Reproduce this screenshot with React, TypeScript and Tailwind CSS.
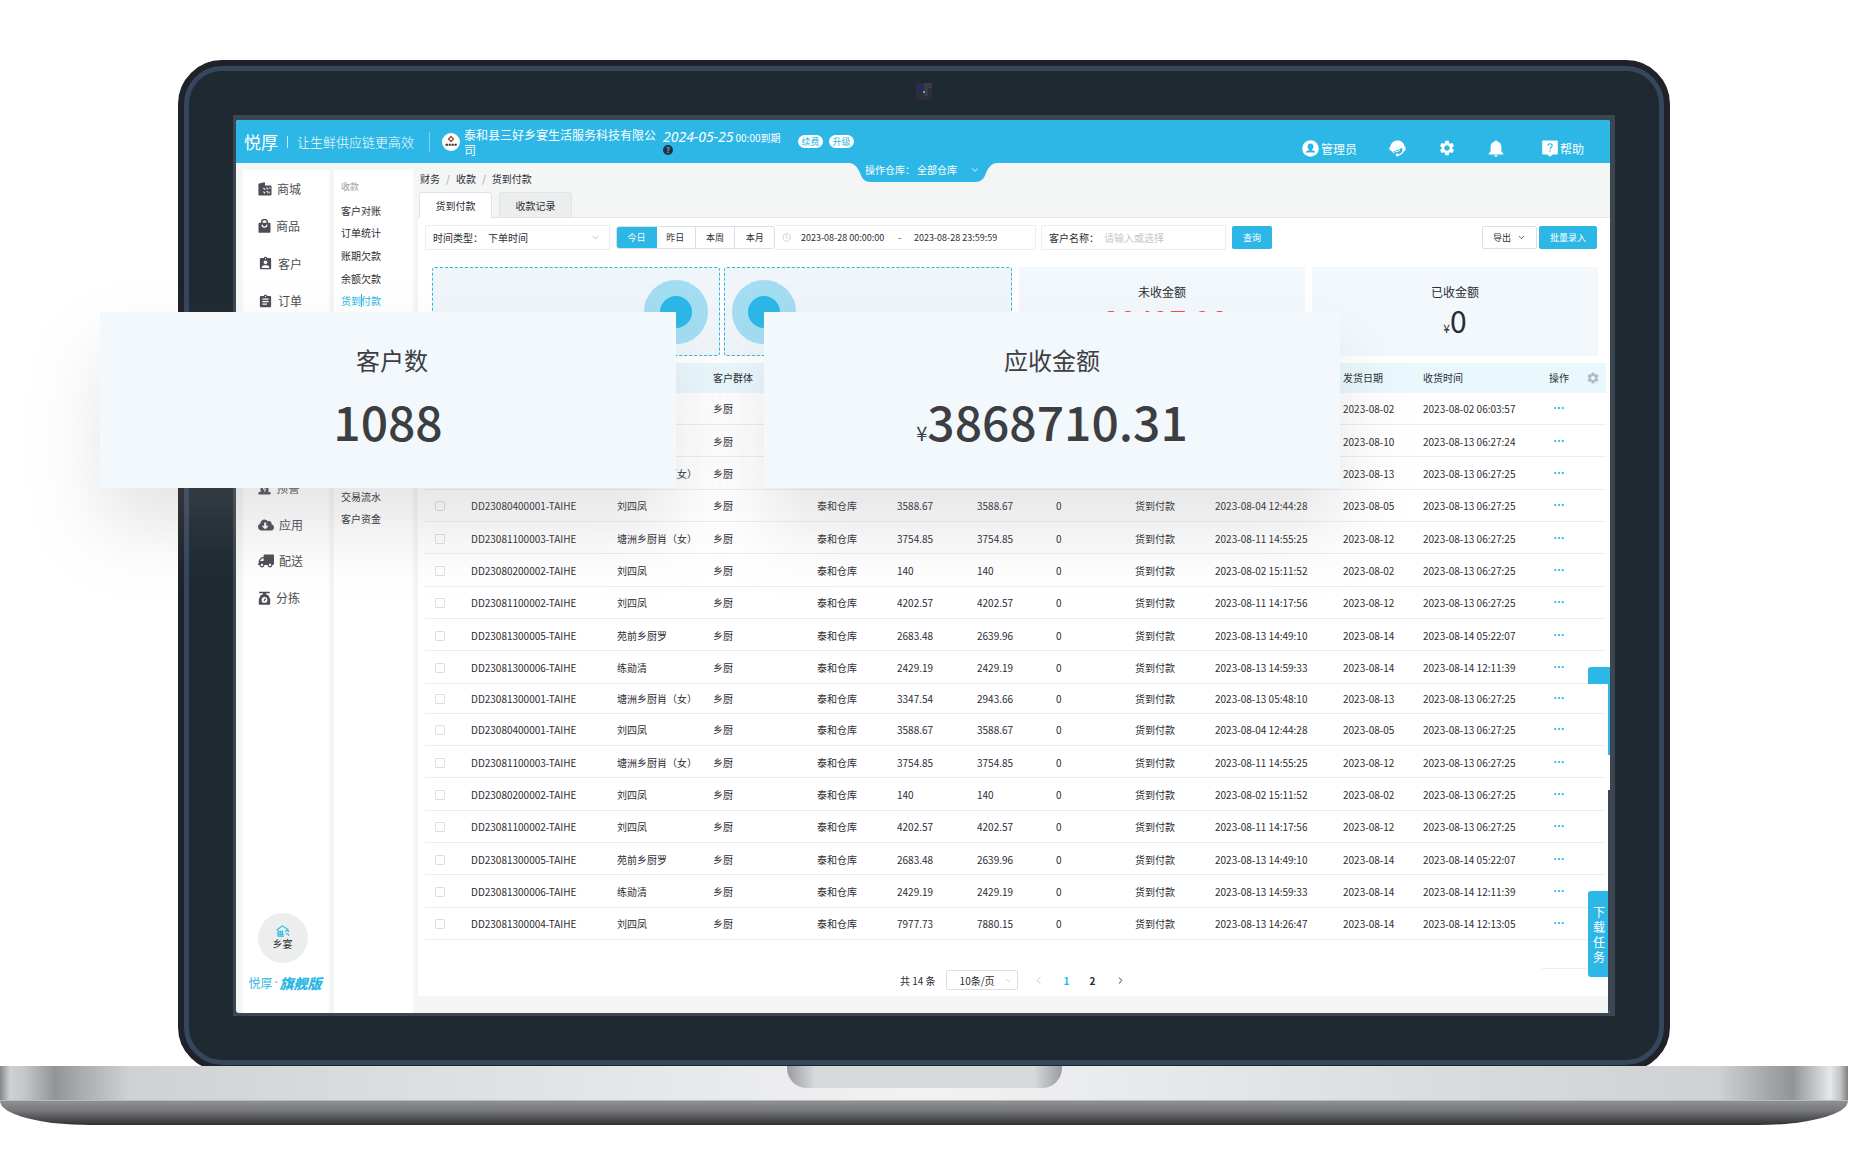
import type { ReactNode } from "react";
import { BsThreeDots } from "react-icons/bs";
import { FaCloudDownloadAlt, FaTruck } from "react-icons/fa";
import { FiChevronDown, FiChevronLeft, FiChevronRight, FiClock } from "react-icons/fi";
import { MdAssignment, MdAssignmentInd, MdSettings } from "react-icons/md";

type Row = {
  no?: string;
  name?: string;
  due?: string;
  real?: string;
  ordered?: string;
  shipped: string;
  received: string;
};

const R1: Row = { no: "DD23081300001-TAIHE", name: "塘洲乡厨肖（女）", due: "3347.54", real: "2943.66", ordered: "2023-08-13 05:48:10", shipped: "2023-08-13", received: "2023-08-13 06:27:25" };
const R2: Row = { no: "DD23080400001-TAIHE", name: "刘四凤", due: "3588.67", real: "3588.67", ordered: "2023-08-04 12:44:28", shipped: "2023-08-05", received: "2023-08-13 06:27:25" };
const R3: Row = { no: "DD23081100003-TAIHE", name: "塘洲乡厨肖（女）", due: "3754.85", real: "3754.85", ordered: "2023-08-11 14:55:25", shipped: "2023-08-12", received: "2023-08-13 06:27:25" };
const R4: Row = { no: "DD23080200002-TAIHE", name: "刘四凤", due: "140", real: "140", ordered: "2023-08-02 15:11:52", shipped: "2023-08-02", received: "2023-08-13 06:27:25" };
const R5: Row = { no: "DD23081100002-TAIHE", name: "刘四凤", due: "4202.57", real: "4202.57", ordered: "2023-08-11 14:17:56", shipped: "2023-08-12", received: "2023-08-13 06:27:25" };
const R6: Row = { no: "DD23081300005-TAIHE", name: "苑前乡厨罗", due: "2683.48", real: "2639.96", ordered: "2023-08-13 14:49:10", shipped: "2023-08-14", received: "2023-08-14 05:22:07" };
const R7: Row = { no: "DD23081300006-TAIHE", name: "练勋清", due: "2429.19", real: "2429.19", ordered: "2023-08-13 14:59:33", shipped: "2023-08-14", received: "2023-08-14 12:11:39" };
const R8: Row = { no: "DD23081300004-TAIHE", name: "刘四凤", due: "7977.73", real: "7880.15", ordered: "2023-08-13 14:26:47", shipped: "2023-08-14", received: "2023-08-14 12:13:05" };

// the first three rows lie mostly under the floating cards
const rows: Row[] = [
  { shipped: "2023-08-02", received: "2023-08-02 06:03:57" },
  { shipped: "2023-08-10", received: "2023-08-13 06:27:24" },
  { name: "塘洲乡厨肖（女）", shipped: "2023-08-13", received: "2023-08-13 06:27:25" },
  R2, R3, R4, R5, R6, R7,
  R1, R2, R3, R4, R5, R6, R7, R8,
];

function MallIcon() {
  return (
    <svg viewBox="0 0 14 14" className="h-[14px] w-[14px]" fill="currentColor">
      <path d="M1.200 1.600 6.200.3c.5 0 .8.3.8.8V3.400h5.600c.5 0 .9.400.9.900v8.300c0 .5-.4.900-.9.900H1.300c-.5 0-.9-.4-.9-.9V2.500c0-.5.300-.8.800-.9Z" />
      <path d="M5 6.500h1.800v1.400M8.200 6h1.600v1.700M11 6h1.500M5 10h1.500v1.600M8.300 9.600h1.500v1.800M11.200 9.600v1.800" stroke="#fff" strokeWidth=".9" fill="none" />
    </svg>
  );
}

function BagIcon() {
  return (
    <svg viewBox="0 0 13 14" className="h-[14px] w-[13px]">
      <path d="M3.600 5V3.400a2.900 2.900 0 0 1 5.800 0V5" fill="none" stroke="currentColor" strokeWidth="1.500" />
      <path d="M1.400 3.800h10.200c.5 0 .9.400.9.900v8.200c0 .5-.4.900-.9.900H1.400c-.5 0-.9-.4-.9-.9V4.700c0-.5.400-.9.9-.9Z" fill="currentColor" />
      <path d="M4 5.600c.2 3.300 4.800 3.300 5 0" fill="none" stroke="#fff" strokeWidth="1.200" />
    </svg>
  );
}

function AlarmIcon() {
  return (
    <svg viewBox="0 0 13 14" className="h-[14px] w-[13px]">
      <path d="M2.500 11V5.500a4 4 0 0 1 8 0V11H12.500v2.500H.5V11Z" fill="currentColor" />
      <path d="m7.200 5-2 3h2.400l-1 2.800" fill="none" stroke="#fff" strokeWidth="1" />
    </svg>
  );
}

function ScaleIcon() {
  return (
    <svg viewBox="0 0 13 14" className="h-[14px] w-[13px]">
      <path d="M1.200.8h10.600v1.500H7.700L9 4h1.200l2 4.200V13c0 .5-.3.8-.8.8H1.600c-.5 0-.8-.3-.8-.8V8.200l2-4.200H4l1.300-1.700H1.200Z" fill="currentColor" />
      <circle cx="6.500" cy="8.900" r="2.900" fill="#fff" />
      <path d="M7.600 7.600 6 9.900" stroke="currentColor" strokeWidth="1.300" />
    </svg>
  );
}

function UserIcon() {
  return (
    <svg viewBox="0 0 17 17" className="h-[17px] w-[17px]">
      <circle cx="8.500" cy="8.500" r="8.300" fill="#fff" />
      <path d="M8.500 3.400c-1.900 0-3 1.400-3 3.100 0 1.300.6 2.400 1.500 3v.8c-1.600.4-3.300 1-3.300 2.300h9.600c0-1.300-1.700-1.900-3.300-2.300v-.8c.9-.6 1.500-1.700 1.500-3 0-1.700-1.100-3.100-3-3.100Z" fill="#2cb7e6" />
    </svg>
  );
}

function ServiceIcon() {
  return (
    <svg viewBox="0 0 17 17" className="h-[17px] w-[17px]">
      <path d="M8.500.5c4 0 6.700 2.700 7 6.100.8.4 1.200 1.100 1.200 2.200 0 1.500-.8 2.500-2 2.600-1 2.400-2.700 3.700-4.600 3.900-.2.700-.9 1.200-1.700 1.200-1 0-1.700-.6-1.700-1.400 0-.9.800-1.500 1.800-1.500.6 0 1.100.2 1.400.6 1.900-.4 3.300-1.900 3.700-4.500-.6-.4-.9-1.200-.9-2.100-2.300 2.400-5.300 3.500-8.300 3.300.6 1.500 1.600 2.500 2.500 3-2-.3-3.300-1.400-4-2.700C1.400 11 .3 10 .3 8.600c0-1.100.5-1.700 1.200-2C1.800 3.200 4.500.5 8.500.5Z" fill="#fff" />
      <path d="M5.800 10.900c1.800 1.300 3.900.9 5-.7" stroke="#fff" strokeWidth="1" fill="none" />
    </svg>
  );
}

function BellIcon() {
  return (
    <svg viewBox="0 0 16 17" className="h-[17px] w-4" fill="#fff">
      <path d="M8 .4c.8 0 1.300.5 1.300 1.200C12 2.300 13.400 4.400 13.400 7.200v4.300l1.800 2c.3.400.1 1-.4 1H1.200c-.5 0-.7-.6-.4-1l1.800-2V7.200c0-2.800 1.400-4.900 4.100-5.600C6.700.9 7.200.4 8 .4ZM6.100 15.200h3.800c-.2.900-.9 1.500-1.900 1.500s-1.700-.6-1.900-1.500Z" />
    </svg>
  );
}

function HelpIcon() {
  return (
    <svg viewBox="0 0 16 17" className="h-[17px] w-4">
      <path d="M1.200.6h13.600c.6 0 1 .4 1 1v12c0 .6-.4 1-1 1h-4L8 16.800l-2.800-2.200h-4c-.6 0-1-.4-1-1v-12c0-.6.4-1 1-1Z" fill="#fff" />
      <path d="M5.900 5.800c.1-2.800 4.400-2.600 4.300 0-.1 1.400-2.100 1.500-2.100 3.300" stroke="#2cb7e6" strokeWidth="1.200" fill="none" />
      <circle cx="8.100" cy="11" r=".8" fill="#2cb7e6" />
    </svg>
  );
}

function HouseIcon() {
  return (
    <svg viewBox="0 0 14 12" className="h-3 w-[14px]" fill="none" stroke="#2cb7e6">
      <path d="M.6 5 6.500.9 12.500 5M2 5v6.300h5.800M2 7h5M2 9.200h6M4.200 5.500v5.800M6.400 5.500v5.800M9.200 6.800c.4-1.600 3.300-1.600 3.600.3M9.600 9c1-.9 1.800-.3 1.700.8M12.600 9v1.800" strokeWidth="1.100" />
    </svg>
  );
}

function NavLink({ icon, label }: { icon: ReactNode; label: string }) {
  return (
    <a href="#" className="flex flex-1 items-center gap-[5px] text-xs text-[#4b4e55]">
      {icon}
      {label}
    </a>
  );
}

function SubLink({ label, active }: { label: string; active?: boolean }) {
  return (
    <a href="#" className={active ? "relative flex items-center text-[#2cb7e6]" : "flex items-center"}>
      {label}
      {active ? <span className="absolute left-5 h-[13px] w-px bg-[#2cb7e6]" /> : null}
    </a>
  );
}

function TopBar() {
  return (
    <header className="relative flex h-[43px] items-center bg-[#2cb7e6] pr-[26px] pl-2 text-white">
      <span className="text-[17px] leading-5">悦厚</span>
      <span className="mx-[9px] h-3 w-px bg-white/70" />
      <span className="text-[13px] leading-5 font-light">让生鲜供应链更高效</span>
      <span className="ml-[15px] h-5 w-px bg-white/40" />
      <svg viewBox="0 0 18 18" className="ml-3 h-[18px] w-[18px] shrink-0">
        <circle cx="9" cy="9" r="9" fill="#fff" />
        <path d="m9 3.500 2.500 2.500L9 8.500 6.500 6Z" fill="none" stroke="#a5423a" strokeWidth="1.300" />
        <path d="M3.500 11.800h2.400M6.700 11.800h2M9.500 11.800h2.200M12.500 11.800h2.200" stroke="#333" strokeWidth="2" />
      </svg>
      <span className="ml-1 w-[193px] text-xs leading-[15px]">泰和县三好乡宴生活服务科技有限公司</span>
      <div className="ml-[6px] w-[124px] leading-[15px]">
        <p className="whitespace-nowrap">
          <span className="font-['Noto_Sans',sans-serif] text-sm leading-[15px] italic">2024-05-25</span>
          <span className="ml-[2px] text-[10px]">00:00到期</span>
        </p>
        <button aria-label="说明" className="flex h-[10px] w-[10px] items-center justify-center rounded-full bg-[#26323b] text-[8px] leading-[10px] font-bold text-[#2cb7e6]">
          ?
        </button>
      </div>
      <button className="ml-[11px] h-[13px] w-[25px] rounded-full bg-white text-[9px] leading-[13px] text-[#2cb7e6]">续费</button>
      <button className="ml-[6px] h-[13px] w-[25px] rounded-full bg-white text-[9px] leading-[13px] text-[#2cb7e6]">升级</button>

      <div className="ml-auto flex items-center gap-8 pt-[13px] text-xs leading-[17px]">
        <a href="#" className="flex items-center gap-[2px]">
          <UserIcon />
          管理员
        </a>
        <a href="#" aria-label="客服"><ServiceIcon /></a>
        <a href="#" aria-label="设置"><MdSettings size={18} /></a>
        <a href="#" aria-label="通知"><BellIcon /></a>
        <a href="#" className="ml-[6px] flex items-center gap-[2px]">
          <HelpIcon />
          帮助
        </a>
      </div>

      {/* warehouse switch hangs below the bar */}
      <div className="absolute top-[42px] left-1/2 z-10 h-5 w-[146px] -translate-x-1/2">
        <svg viewBox="0 0 146 20" className="absolute inset-0 h-5 w-[146px]">
          <path d="M0 1V0h146v1c-5 1-8 5-10 10-2 6-5 9-11 9H21c-6 0-9-3-11-9C8 6 5 2 0 1Z" fill="#2cb7e6" />
        </svg>
        <div className="relative flex h-4 items-center pl-[15px] text-[10px] leading-4">
          <label htmlFor="warehouse" className="w-[52px] shrink-0">操作仓库：</label>
          <select id="warehouse" className="w-[53px] appearance-none">
            <option>全部仓库</option>
          </select>
          <FiChevronDown size={10} />
        </div>
      </div>
    </header>
  );
}

function Filters() {
  return (
    <div className="flex h-[25px] items-center pr-[9px] text-[10px]">
      <div className="flex h-full w-[185px] items-center border border-[#eceef0] pl-[7px]">
        <label htmlFor="time-type" className="w-[55px] shrink-0">时间类型：</label>
        <select id="time-type" className="flex-1 appearance-none">
          <option>下单时间</option>
        </select>
        <FiChevronDown size={11} className="mr-2 text-[#b9bdc2]" />
      </div>
      <div className="ml-[6px] flex h-[23px] w-[159px] overflow-hidden rounded-[3px] border border-[#dcdfe3]">
        <button className="-m-px w-[41px] bg-[#2cb7e6] text-[9px] text-white">今日</button>
        <button className="flex-1 text-[9px]">昨日</button>
        <button className="flex-1 border-l border-[#dcdfe3] text-[9px]">本周</button>
        <button className="flex-1 border-l border-[#dcdfe3] text-[9px]">本月</button>
      </div>
      <div className="flex h-full w-[261px] items-center border border-l-0 border-[#eceef0] pl-[7px] text-[9px]">
        <FiClock size={9} className="mr-[10px] text-[#c3c7cb]" />
        <input aria-label="开始时间" defaultValue="2023-08-28 00:00:00" className="w-[97px]" />
        <span className="w-4">-</span>
        <input aria-label="结束时间" defaultValue="2023-08-28 23:59:59" className="w-[97px]" />
      </div>
      <div className="ml-[5px] flex h-full w-[185px] items-center border border-[#eceef0] pl-[7px]">
        <label htmlFor="customer" className="w-[55px] shrink-0">客户名称：</label>
        <input id="customer" placeholder="请输入或选择" className="w-full placeholder:text-[#c3c7cb]" />
      </div>
      <button className="ml-[6px] h-[23px] w-10 rounded-[2px] bg-[#2cb7e6] text-[9px] text-white">查询</button>
      <button className="ml-auto flex h-[23px] w-[55px] items-center justify-center gap-[6px] rounded-[2px] border border-[#dcdfe3] text-[9px]">
        导出
        <FiChevronDown size={9} />
      </button>
      <button className="ml-[2px] h-[23px] w-[58px] rounded-[2px] bg-[#2cb7e6] text-[9px] text-white">批量录入</button>
    </div>
  );
}

function Stats() {
  return (
    <div className="mt-[17px] grid h-[89px] grid-cols-[580fr_286fr_286fr] gap-[7px] pr-2 pl-[7px]">
      <div className="grid grid-cols-2 gap-1">
        <div className="flex items-center justify-end rounded-[3px] border border-dashed border-[#2cb7e6] bg-[#f0f5fa] pr-[11px]">
          <span className="h-16 w-16 rounded-full border-16 border-[#a3ddf2] bg-[#2cb7e6]" />
        </div>
        <div className="flex items-center rounded-[3px] border border-dashed border-[#2cb7e6] bg-[#f0f5fa] pl-[7px]">
          <span className="h-16 w-16 rounded-full border-16 border-[#a3ddf2] bg-[#2cb7e6]" />
        </div>
      </div>
      <div className="bg-[#f2f8fc] pt-4 text-center">
        <p className="text-xs leading-[18px]">未收金额</p>
        <p className="text-[30px] leading-[38px] text-[#f5484f]"><span className="text-xs">¥</span>38497.98</p>
      </div>
      <div className="bg-[#f2f8fc] pt-4 text-center">
        <p className="text-xs leading-[18px]">已收金额</p>
        <p className="text-[30px] leading-[38px]"><span className="text-xs">¥</span>0</p>
      </div>
    </div>
  );
}

function Orders() {
  return (
    <table className="mt-[7px] h-[577px] w-full table-fixed border-collapse text-left text-[10px] leading-4 whitespace-nowrap">
      <colgroup>
        <col className="w-[46px]" />
        <col className="w-[146px]" />
        <col className="w-[96px]" />
        <col className="w-[104px]" />
        <col className="w-[80px]" />
        <col className="w-[80px]" />
        <col className="w-[79px]" />
        <col className="w-[79px]" />
        <col className="w-[80px]" />
        <col className="w-[128px]" />
        <col className="w-[80px]" />
        <col className="w-[126px]" />
        <col />
      </colgroup>
      <thead>
        <tr className="h-[30px] bg-[#e9f8fd]">
          <th aria-label="选择" />
          <th aria-label="订单号" />
          <th aria-label="客户名称" />
          <th className="font-normal">客户群体</th>
          <th aria-label="仓库" />
          <th aria-label="应收金额" />
          <th aria-label="未收金额" />
          <th aria-label="已收金额" />
          <th aria-label="支付方式" />
          <th aria-label="下单时间" />
          <th className="font-normal">发货日期</th>
          <th className="font-normal">收货时间</th>
          <th className="font-normal">
            <span className="flex items-center gap-[17px]">
              操作
              <MdSettings size={14} className="text-[#b4bbc0]" />
            </span>
          </th>
        </tr>
      </thead>
      <tbody>
        {rows.map((row, i) => (
          <tr key={i} className={i === 9 ? "h-[30px] border-b border-[#eceef3]" : "border-b border-[#eceef3]"}>
            <td className="pt-[2px] pl-[10px]">
              <input
                type="checkbox"
                aria-label="选择订单"
                className="block h-[10px] w-[10px] appearance-none rounded-[1px] border border-[#dcdfe3] bg-white"
              />
            </td>
            <td className="pt-[2px]">{row.no}</td>
            <td className="pt-[2px]">{row.name}</td>
            <td className="pt-[2px]">乡厨</td>
            <td className="pt-[2px]">{row.no ? "泰和仓库" : null}</td>
            <td className="pt-[2px]">{row.due}</td>
            <td className="pt-[2px]">{row.real}</td>
            <td className="pt-[2px]">{row.no ? "0" : null}</td>
            <td className="pt-[2px]">{row.no ? "货到付款" : null}</td>
            <td className="pt-[2px]">{row.ordered}</td>
            <td className="pt-[2px]">{row.shipped}</td>
            <td className="pt-[2px]">{row.received}</td>
            <td>
              <button aria-label="更多" className="flex w-5 justify-center text-[#2cb7e6]">
                <BsThreeDots size={12} />
              </button>
            </td>
          </tr>
        ))}
      </tbody>
    </table>
  );
}

function Pager() {
  return (
    <div className="mt-[30px] flex h-5 items-center pl-[475px] text-[10px]">
      <span>共 14 条</span>
      <div className="ml-[10px] flex h-5 w-[72px] items-center rounded-[2px] border border-[#dcdfe3] pl-[13px]">
        <select aria-label="每页条数" className="flex-1 appearance-none">
          <option>10条/页</option>
        </select>
        <FiChevronDown size={9} className="mr-1 text-[#c3c7cb]" />
      </div>
      <button aria-label="上一页" className="ml-[15px] text-[#b9bdc2]"><FiChevronLeft size={11} /></button>
      <button className="ml-5 font-bold text-[#2cb7e6]">1</button>
      <button className="ml-5 font-bold">2</button>
      <button aria-label="下一页" className="ml-5"><FiChevronRight size={11} /></button>
    </div>
  );
}

function Screen() {
  return (
    <div className="relative overflow-hidden rounded-[3px] bg-[#f4f6f6] text-[#2b2d33]">
      <TopBar />
      <div className="flex">
        <aside className="mt-[7px] ml-[7px] flex w-[86px] flex-col bg-white">
          <nav className="flex h-[150px] flex-col pl-[15px]">
            <NavLink icon={<MallIcon />} label="商城" />
            <NavLink icon={<BagIcon />} label="商品" />
            <NavLink icon={<MdAssignmentInd size={15} />} label="客户" />
            <NavLink icon={<MdAssignment size={15} />} label="订单" />
          </nav>
          <nav className="mt-[150px] flex h-[146px] flex-col pl-[15px]">
            <NavLink icon={<AlarmIcon />} label="预警" />
            <NavLink icon={<FaCloudDownloadAlt size={16} />} label="应用" />
            <NavLink icon={<FaTruck size={16} className="-scale-x-100" />} label="配送" />
            <NavLink icon={<ScaleIcon />} label="分拣" />
          </nav>
          <div className="mt-auto flex flex-col items-center pr-[7px] pb-3">
            <div className="flex h-[50px] w-[50px] flex-col items-center justify-center rounded-full bg-[#eceeee] pb-px text-[10px] leading-[14px]">
              <HouseIcon />
              乡宴
            </div>
          </div>
          <p className="mb-[22px] flex items-center justify-center pr-[2px] text-xs leading-4 whitespace-nowrap text-[#2cb7e6]">
            <span>悦厚</span>
            <span className="mx-[2px] font-['Noto_Sans',sans-serif]">·</span>
            <span className="text-sm leading-4 font-black italic">旗舰版</span>
          </p>
        </aside>

        <aside className="mt-[7px] ml-[5px] w-[79px] bg-white pt-[9px] pl-[7px] text-[10px]">
          <p className="text-[9px] leading-4 text-[#9a9da3]">收款</p>
          <nav className="mt-1 grid h-[113px] auto-rows-fr">
            <SubLink label="客户对账" />
            <SubLink label="订单统计" />
            <SubLink label="账期欠款" />
            <SubLink label="余额欠款" />
            <SubLink label="货到付款" active />
          </nav>
          <nav className="mt-[173px] grid h-11 auto-rows-fr">
            <SubLink label="交易流水" />
            <SubLink label="客户资金" />
          </nav>
        </aside>

        <main className="ml-[5px] min-w-0 flex-1 pb-[17px]">
          <p className="flex h-[29px] items-center gap-[6px] pt-[2px] pl-[2px] text-[10px]">
            <a href="#">财务</a>
            <span className="text-[#9a9da3]">/</span>
            <a href="#">收款</a>
            <span className="text-[#9a9da3]">/</span>
            <a href="#">货到付款</a>
          </p>
          <div className="flex h-[26px] gap-[7px] border-b border-[#e1e4e6] pl-px text-[10px]">
            <button className="-mb-px w-[73px] rounded-t-[3px] border border-b-0 border-[#e1e4e6] bg-white">货到付款</button>
            <button className="w-[73px] rounded-t-[3px] border border-b-0 border-[#e1e4e6] bg-[#eceeee]">收款记录</button>
          </div>
          <section className="bg-white pt-[7px] pr-1 pb-[6px] pl-[7px]">
            <Filters />
            <Stats />
            <Orders />
            <Pager />
          </section>
        </main>
      </div>

      {/* side drawer handles */}
      <span className="absolute top-[547px] right-0 h-[17px] w-[22px] rounded-tl-[3px] bg-[#2cb7e6]" />
      <span className="absolute top-[564px] right-0 h-[71px] w-[2px] bg-[#2cb7e6]" />
      <span className="absolute top-[848px] right-[22px] h-px w-[46px] bg-[#eceef3]" />
      <span className="absolute top-[670px] right-0 bottom-0 w-[2px] bg-[#3b4650]" />
      <button className="absolute top-[771px] right-[2px] flex h-[86px] w-5 items-center rounded-l-[3px] bg-[#2cb7e6] pr-[3px] pl-[5px] text-xs leading-[15px] text-white">
        下载任务
      </button>
    </div>
  );
}

export default function App() {
  return (
    <div className="relative min-h-screen overflow-hidden bg-white pt-[60px] font-['Noto_Sans_CJK_SC',sans-serif]">
      <div className="relative mr-[186px] -mb-[5px] ml-[178px] rounded-[44px] border-[6px] border-[#1f2228] bg-[#1f2228]">
        <div className="rounded-[38px] border-[5px] border-[#35465d] bg-[#1e2931] p-[44px]">
          <div className="border-t-[5px] border-r-[5px] border-b-[3px] border-l-[3px] border-[#3b4650] bg-[#3b4650]">
            <Screen />
          </div>
        </div>
        <svg viewBox="0 0 16 17" className="absolute top-[17px] left-1/2 h-[17px] w-4 -translate-x-1/2">
          <path d="M0 0h16v17H0Z" fill="#2e2f33" />
          <path d="M0 2h6v3h2v3H0Z" fill="#2a2960" />
          <path d="M8 0h8v5h-4v8H8Z" fill="#3c3c42" />
          <path d="M7 8h2v2H7Z" fill="#2cb7e6" />
        </svg>
      </div>

      <div className="relative mr-2">
        <div className="flex h-[35px] justify-center border-b border-[#b9babd] bg-[linear-gradient(90deg,#85868a_0,#d0d1d3_10px,#c4c5c7_25px,#939496_55px,#a9aaad_80px,#d0d1d3_130px,#dcdddf_400px,#e8e9eb_700px,#f2f2f2_50%,#e8e9eb_calc(100%-700px),#dadbdd_calc(100%-400px),#d0d1d3_calc(100%-130px),#a5a6aa_calc(100%-80px),#939496_calc(100%-55px),#e6e7e8_calc(100%-18px),#c4c5c7_calc(100%-8px),#808084_100%)]">
          <div className="h-[22px] w-[275px] rounded-b-[20px] bg-[linear-gradient(90deg,#9a9b9f,#d8d9db_28px,#d8d9db_calc(100%-28px),#9a9b9f)]" />
        </div>
        <div className="h-6 bg-[linear-gradient(180deg,#8f9094,#77787c_40%,#303034)] [border-radius:0_0_90px_90px/0_0_24px_24px]" />
      </div>

      {/* enlarged figures float over the laptop */}
      <div className="absolute top-[312px] left-[100px] flex gap-[88px] text-center text-[#3d3e42]">
        <div className="h-44 w-[576px] bg-[#f2f8fc] pt-[30px] shadow-[0_40px_70px_rgba(136,136,136,0.22)]">
          <p className="pl-2 text-2xl leading-9">客户数</p>
          <p className="mt-[10px] text-5xl leading-[64px] font-medium">1088</p>
        </div>
        <div className="h-44 w-[576px] bg-[#f2f8fc] pt-[30px] shadow-[0_40px_70px_rgba(136,136,136,0.22)]">
          <p className="text-2xl leading-9">应收金额</p>
          <p className="mt-[10px] text-5xl leading-[64px] font-medium">
            <span className="text-xl font-normal">¥</span>3868710.31
          </p>
        </div>
      </div>
    </div>
  );
}
